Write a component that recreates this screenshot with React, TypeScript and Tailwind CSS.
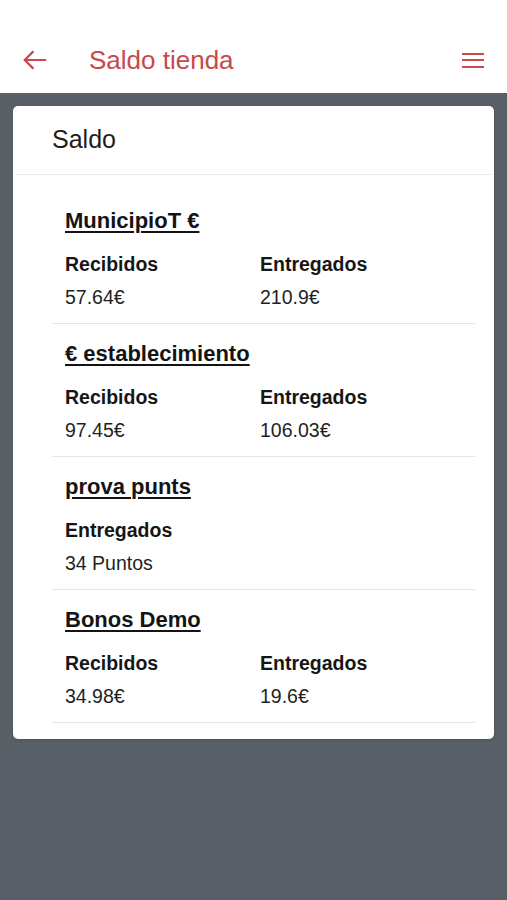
import React from 'react';

type Entry = { label: string; value: string };
type Block = { title: string; entries: Entry[] };

const blocks: Block[] = [
  {
    title: 'MunicipioT €',
    entries: [
      { label: 'Recibidos', value: '57.64€' },
      { label: 'Entregados', value: '210.9€' },
    ],
  },
  {
    title: '€ establecimiento',
    entries: [
      { label: 'Recibidos', value: '97.45€' },
      { label: 'Entregados', value: '106.03€' },
    ],
  },
  {
    title: 'prova punts',
    entries: [{ label: 'Entregados', value: '34 Puntos' }],
  },
  {
    title: 'Bonos Demo',
    entries: [
      { label: 'Recibidos', value: '34.98€' },
      { label: 'Entregados', value: '19.6€' },
    ],
  },
];

const font = { fontFamily: '"Liberation Sans", Arial, sans-serif' };

export default function App() {
  return (
    <div className="min-h-[900px] w-full bg-[#585f66] flex flex-col" style={font}>
      {/* top bar */}
      <header className="h-[93px] bg-white pt-[27px]">
        <div className="h-[66px] flex items-center pl-[22px] pr-[23px]">
          <svg width="26" height="26" viewBox="0 0 24 24" fill="none" stroke="#c9484b" strokeWidth="2" strokeLinecap="round" strokeLinejoin="round">
            <path d="M21.5 12H2.5" />
            <path d="M10 4.5 2.5 12l7.5 7.5" />
          </svg>
          <h1 className="ml-[41px] text-[26px] text-[#c9484b] leading-none">Saldo tienda</h1>
          <div className="ml-auto flex flex-col gap-[4.5px] w-[22px]">
            <span className="block h-[2px] bg-[#c9484b]" />
            <span className="block h-[2px] bg-[#c9484b]" />
            <span className="block h-[2px] bg-[#c9484b]" />
          </div>
        </div>
      </header>

      <main className="px-[13px] pt-[13px]">
        <div className="bg-white rounded-[5px] shadow-sm">
          <div className="h-[69px] flex items-center pl-[39px] border-b border-[#e6e8ea] mx-[3px]">
            <span className="text-[25px] text-[#1d1d1d] -ml-[3px]">Saldo</span>
          </div>
          <div className="pl-[39px] pr-[19px] pt-[16px] pb-[16px]">
            {blocks.map((b) => (
              <section key={b.title} className="border-b border-[#e4e6e8] pl-[13px] pt-[15px] pb-[13px]">
                <h2 className="text-[22px] leading-[30px] font-bold underline underline-offset-[3px] decoration-[1.5px] text-[#141414]">
                  {b.title}
                </h2>
                <div className="grid grid-cols-[195px_1fr] mt-[15px]">
                  {b.entries.map((e) => (
                    <div key={e.label} className="flex flex-col gap-[7px]">
                      <span className="text-[19.5px] leading-[26px] font-bold text-[#161616]">{e.label}</span>
                      <span className="text-[19.5px] leading-[26px] text-[#1f1f1f]">{e.value}</span>
                    </div>
                  ))}
                </div>
              </section>
            ))}
          </div>
        </div>
      </main>
    </div>
  );
}
